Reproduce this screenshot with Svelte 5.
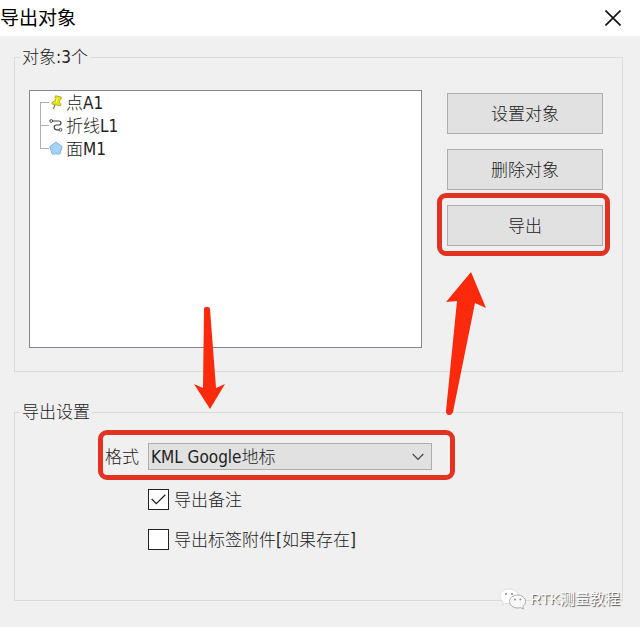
<script lang="ts">
  type Kind = 'point' | 'line' | 'area'

  const objects: { kind: Kind; name: string }[] = [
    { kind: 'point', name: '点A1' },
    { kind: 'line', name: '折线L1' },
    { kind: 'area', name: '面M1' },
  ]

  let format = $state('kml')
  let exportNotes = $state(true)
  let exportAttachments = $state(false)
</script>

<div class="dialog">
  <header class="titlebar">
    <h1>导出对象</h1>
    <button class="close" type="button" aria-label="关闭">
      <svg width="16" height="16" viewBox="0 0 16 16">
        <path d="M0.5 0.5 15.5 15.5M15.5 0.5 0.5 15.5" fill="none" stroke="#111" stroke-width="1.6" />
      </svg>
    </button>
  </header>

  <main class="content">
    <fieldset class="group group--objects">
      <legend>对象:{objects.length}个</legend>
      <ul class="tree">
        {#each objects as object, i}
          <li>
            <svg class="branch" width="9" height="23" viewBox="0 0 9 23">
              <path
                d="M0.5 {i === 0 ? 11 : 0}V{i === objects.length - 1 ? 12 : 23}M0 11.5H9"
                fill="none"
                stroke="#b0b0b0"
              />
            </svg>
            <svg class="icon" width="15" height="15" viewBox="0 0 15 15">
              {#if object.kind === 'point'}
                <path d="M6 9.5 4.5 14" stroke="#777" stroke-width="1.2" />
                <path
                  d="M6.5 0.8 12.4 2 12 4 11 4.6 10.4 7.2 12 8.8 11.4 10.8 2.8 9 3.4 7 5.6 6 6.8 3.6 6 2.6Z"
                  fill="#e3e312"
                  stroke="#a3a51c"
                  stroke-width="0.8"
                />
                <path d="M8.2 3 7.4 7" stroke="#fafa8c" />
              {:else if object.kind === 'line'}
                <path
                  d="M3.5 3H9.5Q12 3 12 5T9.5 7H7.5Q5.2 7 5.2 9.2T7.5 11.8H10"
                  fill="none"
                  stroke="#444"
                  stroke-width="1.2"
                />
                <circle cx="2.2" cy="3" r="1.4" fill="#fff" stroke="#444" />
                <circle cx="11.5" cy="11.8" r="1.4" fill="#fff" stroke="#444" />
              {:else}
                <path
                  d="M7 1 13.2 5.6 10.9 13H3.1L0.8 5.6Z"
                  fill="#a5d3f5"
                  stroke="#82b4dc"
                  stroke-linejoin="round"
                />
              {/if}
            </svg>
            <span>{object.name}</span>
          </li>
        {/each}
      </ul>
      <div class="actions">
        <button class="action" type="button">设置对象</button>
        <button class="action" type="button">删除对象</button>
        <div class="marked marked--export">
          <button class="action" type="button">导出</button>
        </div>
      </div>
    </fieldset>

    <fieldset class="group group--settings">
      <legend>导出设置</legend>
      <div class="form">
        <div class="marked marked--format">
          <label for="format">格式</label>
          <div class="select">
            <select id="format" bind:value={format}>
              <option value="kml">KML Google地标</option>
            </select>
            <svg class="chevron" width="12" height="8" viewBox="0 0 12 8">
              <path d="M0.7 1 6 6.3 11.3 1" fill="none" stroke="#444" stroke-width="1.2" />
            </svg>
          </div>
        </div>
        <label class="check">
          <input type="checkbox" bind:checked={exportNotes} />
          <svg class="tick" width="15" height="11" viewBox="0 0 15 11">
            <path d="M0.7 5 5.3 9.6 14.3 0.7" fill="none" stroke="#222" stroke-width="1.3" />
          </svg>
          导出备注
        </label>
        <label class="check">
          <input type="checkbox" bind:checked={exportAttachments} />
          <svg class="tick" width="15" height="11" viewBox="0 0 15 11">
            <path d="M0.7 5 5.3 9.6 14.3 0.7" fill="none" stroke="#222" stroke-width="1.3" />
          </svg>
          导出标签附件[如果存在]
        </label>
      </div>
    </fieldset>
  </main>

  <svg class="arrow arrow--down" width="32" height="104" viewBox="0 0 32 104">
    <path d="M10 2Q10 0 12 0H14Q16 0 16 2L22 81 31 77 16 102 0 77 9 81Z" fill="#fb2a0c" />
  </svg>
  <svg class="arrow arrow--up" width="42" height="144" viewBox="0 0 42 144">
    <path d="M26 0 41 36 30 31 8 140Q7 143 4 143T1 139L12 29 1 30Z" fill="#fb2a0c" />
  </svg>

  <div class="watermark">
    <svg width="28" height="22" viewBox="0 0 28 22">
      <path
        d="M10 1C4.5 1 1 4.3 1 8.3 1 10.6 2.3 12.6 4.3 14L3.5 17 7 15.3C8 15.6 9 15.7 10 15.7 15.5 15.7 19 12.5 19 8.3 19 4.3 15.5 1 10 1Z"
        fill="#fff"
        stroke="#ccc"
        stroke-width="0.6"
      />
      <path
        d="M18.5 7C14 7 10.5 10 10.5 13.5S14 20 18.5 20C19.5 20 20.5 19.9 21.4 19.6L24.5 21 23.8 18.4C25.6 17.2 26.6 15.5 26.6 13.5 26.6 10 23 7 18.5 7Z"
        fill="#f8f8f8"
        stroke="#999"
        stroke-width="0.8"
      />
      <g fill="#888">
        <circle cx="7" cy="6" r="1" />
        <circle cx="13" cy="6" r="1" />
        <circle cx="16" cy="11.5" r="0.9" />
        <circle cx="21.3" cy="11.5" r="0.9" />
      </g>
    </svg>
    <span>RTK测量教程</span>
  </div>
</div>

<style>
  :global(body) {
    margin: 0;
    background: #f0f0f0;
  }

  .dialog {
    position: relative;
    color: #222;
    font-family: "DejaVu Sans Condensed", "Noto Sans CJK SC", sans-serif;
    font-size: 17px;
    font-weight: 300;
    line-height: 20px;
  }

  .titlebar {
    display: flex;
    align-items: center;
    justify-content: space-between;
    height: 36px;
    padding-right: 19px;
    background: #fff;
  }

  h1 {
    margin: 0;
    font-size: 19px;
    font-weight: 400;
    color: #000;
  }

  button,
  select {
    box-sizing: border-box;
    font: inherit;
    color: inherit;
  }

  .close {
    display: flex;
    padding: 0;
    border: none;
    background: none;
  }

  .content {
    display: flex;
    flex-direction: column;
    gap: 30px;
    padding: 11px 17px 26px 14px;
  }

  .group {
    min-width: 0;
    margin: 0;
    border: 1px solid #dcdcdc;
  }

  .group--objects {
    display: flex;
    gap: 25px;
    padding: 23px 19px 23px 14px;
  }

  .group--settings {
    padding: 21px 19px 50px 14px;
  }

  .form {
    display: flex;
    flex-direction: column;
    align-items: flex-start;
    gap: 19px;
    padding-left: 76px;
  }

  legend {
    margin-left: -9px;
    padding: 0 2px;
  }

  .tree {
    flex: 1;
    box-sizing: border-box;
    height: 258px;
    margin: 0;
    padding: 0 10px;
    border: 1px solid #828790;
    background: #fff;
    list-style: none;
  }

  .tree li {
    display: flex;
    align-items: center;
    height: 23px;
  }

  .icon {
    margin-right: 2px;
  }

  .actions {
    display: flex;
    flex-direction: column;
    gap: 15px;
    width: 156px;
    padding-top: 3px;
  }

  .action {
    width: 100%;
    height: 41px;
    padding: 0;
    border: 1px solid #adadad;
    background: #e1e1e1;
  }

  .marked {
    position: relative;
    display: flex;
  }

  /* red frame drawn around the controls to use */
  .marked::after {
    content: "";
    position: absolute;
    border: 5px solid #e03322;
    border-radius: 9px;
    pointer-events: none;
  }

  .marked--export::after {
    inset: -12px -7px -10px -10px;
  }

  .marked--format {
    align-items: center;
    gap: 9px;
  }

  .marked--format::after {
    inset: -13px -23px -10px -7px;
  }

  .select {
    position: relative;
  }

  select {
    display: block;
    width: 284px;
    height: 27px;
    padding: 0 30px 0 2px;
    border: 1px solid #adadad;
    border-radius: 0;
    background: #e1e1e1;
    appearance: none;
  }

  .chevron {
    position: absolute;
    top: 10px;
    right: 8px;
    pointer-events: none;
  }

  .check {
    position: relative;
    display: flex;
    align-items: center;
    gap: 5px;
    margin-left: 43px;
  }

  .check input {
    box-sizing: border-box;
    width: 21px;
    height: 21px;
    margin: 0;
    border: 1px solid #222;
    background: #fff;
    appearance: none;
  }

  .tick {
    position: absolute;
    top: 5px;
    left: 3px;
    visibility: hidden;
    pointer-events: none;
  }

  .check input:checked + .tick {
    visibility: visible;
  }

  .arrow {
    position: absolute;
    pointer-events: none;
  }

  .arrow--down {
    top: 307px;
    left: 194px;
  }

  .arrow--up {
    top: 272px;
    right: 153px;
  }

  .watermark {
    position: absolute;
    right: 20px;
    bottom: 17px;
    display: flex;
    align-items: center;
    gap: 3px;
    color: #fff;
    font-family: "Liberation Sans", "Noto Sans CJK SC", sans-serif;
    font-size: 15px;
    font-weight: 400;
    text-shadow: 1px 1px 1px #555;
  }
</style>
